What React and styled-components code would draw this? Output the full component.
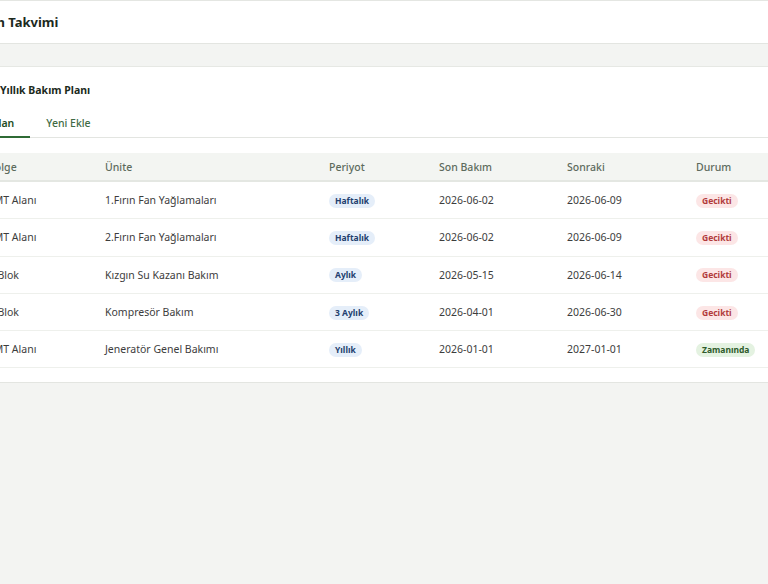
import React, { useState } from "react";
import styled, { createGlobalStyle } from "styled-components";

const GlobalStyle = createGlobalStyle`
  html, body {
    margin:0;
    padding:0;
    background:#f3f4f2;
    overflow:hidden;
  }
  body {
    font-family:"Noto Sans","Open Sans",Arial,sans-serif;
    color:#333;
  }
`;

const Shell = styled.div`
  width:calc(100% + 48px);
  margin-left:-24px;
  min-height:584px;
  border-top:1px solid #e4e6e2;
`;

const TopBar = styled.header`
  height:42px;
  background:#fff;
  border-bottom:1px solid #e3e5e1;
  display:flex;
  align-items:center;
`;

const PageTitle = styled.h1`
  margin:0 0 0 -8px;
  font-size:13px;
  font-weight:700;
  color:#1c2a1d;
`;

const Main = styled.main`
  padding:22px 0;
`;

const Card = styled.section`
  background:#fff;
  border-top:1px solid #e6e8e4;
  border-bottom:1px solid #e3e5e1;
  padding:15px 0 14px;
`;

const CardTitle = styled.h2`
  display:flex;
  align-items:center;
  gap:8px;
  margin:0 0 11px;
  font-size:10.5px;
  font-weight:700;
  color:#1c2a1d;
  line-height:16px;
  svg { flex:none; color:#2f6b35; }
`;

const Tabs = styled.div`
  display:flex;
  border-bottom:1px solid #e3e5e1;
  margin-bottom:15px;
`;

const Tab = styled.button`
  background:none;
  border:none;
  font-family:inherit;
  font-size:10.5px;
  font-weight:${p => (p.$active ? 600 : 500)};
  color:${p => (p.$active ? "#1f4d24" : "#3f6b44")};
  padding:7px 16px 6px;
  border-bottom:2px solid ${p => (p.$active ? "#2f6b35" : "transparent")};
  margin-bottom:-1px;
  cursor:pointer;
`;

const Table = styled.table`
  width:100%;
  border-collapse:collapse;
  table-layout:fixed;
`;

const Th = styled.th`
  box-sizing:border-box;
  text-align:left;
  font-size:10.5px;
  font-weight:500;
  color:#5d6b5d;
  background:#f3f5f2;
  height:28px;
  padding:0 12px;
  border-bottom:2px solid #e4e7e2;
  width:${p => p.$w || "auto"};
`;

const Td = styled.td`
  font-size:10.5px;
  color:#3d3d3d;
  height:36.3px;
  padding:0 12px;
  border-bottom:1px solid #eef0ec;
  white-space:nowrap;
`;

const Pill = styled.span`
  display:inline-block;
  font-size:8.5px;
  font-weight:700;
  line-height:14px;
  padding:0 6px;
  border-radius:8px;
  background:${p => p.$bg};
  color:${p => p.$fg};
`;

const kinds = {
  period: { bg: "#e5eef9", fg: "#23406e" },
  late: { bg: "#fce6e6", fg: "#b23b3b" },
  ok: { bg: "#e4f2e1", fg: "#2e5b2b" },
};

const rows = [
  { zone: "SMT Alanı", unit: "1.Fırın Fan Yağlamaları", period: "Haftalık", last: "2026-06-02", next: "2026-06-09", late: true },
  { zone: "SMT Alanı", unit: "2.Fırın Fan Yağlamaları", period: "Haftalık", last: "2026-06-02", next: "2026-06-09", late: true },
  { zone: "A Blok", unit: "Kızgın Su Kazanı Bakım", period: "Aylık", last: "2026-05-15", next: "2026-06-14", late: true },
  { zone: "A Blok", unit: "Kompresör Bakım", period: "3 Aylık", last: "2026-04-01", next: "2026-06-30", late: true },
  { zone: "SMT Alanı", unit: "Jeneratör Genel Bakımı", period: "Yıllık", last: "2026-01-01", next: "2027-01-01", late: false },
];

const CalendarIcon = () => (
  <svg width="16" height="16" viewBox="0 0 24 24" fill="none" stroke="currentColor" strokeWidth="2" strokeLinecap="round" strokeLinejoin="round">
    <rect x="3" y="4" width="18" height="18" rx="2" />
    <path d="M16 2v4M8 2v4M3 10h18" />
  </svg>
);

const App = () => {
  const [tab, setTab] = useState("plan");
  return (
    <>
      <GlobalStyle />
      <Shell>
        <TopBar>
          <PageTitle>Bakın Takvimi</PageTitle>
        </TopBar>
        <Main>
          <Card>
            <CardTitle><CalendarIcon />Yıllık Bakım Planı</CardTitle>
            <Tabs>
              <Tab $active={tab === "plan"} onClick={() => setTab("plan")}>Plan</Tab>
              <Tab $active={tab === "new"} onClick={() => setTab("new")}>Yeni Ekle</Tab>
            </Tabs>
            <Table>
              <thead>
                <tr>
                  <Th $w="117px">Bölge</Th>
                  <Th $w="224px">Ünite</Th>
                  <Th $w="110px">Periyot</Th>
                  <Th $w="128px">Son Bakım</Th>
                  <Th $w="129px">Sonraki</Th>
                  <Th>Durum</Th>
                </tr>
              </thead>
              <tbody>
                {rows.map((r, i) => {
                  const st = r.late ? kinds.late : kinds.ok;
                  return (
                    <tr key={i}>
                      <Td>{r.zone}</Td>
                      <Td>{r.unit}</Td>
                      <Td><Pill $bg={kinds.period.bg} $fg={kinds.period.fg}>{r.period}</Pill></Td>
                      <Td>{r.last}</Td>
                      <Td>{r.next}</Td>
                      <Td><Pill $bg={st.bg} $fg={st.fg}>{r.late ? "Gecikti" : "Zamanında"}</Pill></Td>
                    </tr>
                  );
                })}
              </tbody>
            </Table>
          </Card>
        </Main>
      </Shell>
    </>
  );
};

export default App;
